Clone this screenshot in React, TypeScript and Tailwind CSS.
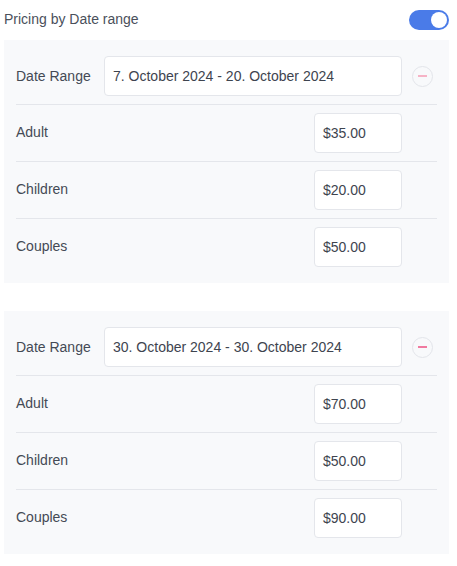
import React from "react";

type Card = { range: string; minus: string; prices: { label: string; value: string }[] };

const cards: Card[] = [
  {
    range: "7. October 2024 - 20. October 2024",
    minus: "bg-[#f6b3c6]",
    prices: [
      { label: "Adult", value: "$35.00" },
      { label: "Children", value: "$20.00" },
      { label: "Couples", value: "$50.00" },
    ],
  },
  {
    range: "30. October 2024 - 30. October 2024",
    minus: "bg-[#f07aa0]",
    prices: [
      { label: "Adult", value: "$70.00" },
      { label: "Children", value: "$50.00" },
      { label: "Couples", value: "$90.00" },
    ],
  },
];

function MinusButton({ color }: { color: string }) {
  return (
    <div className="w-[21px] h-[21px] rounded-full border border-[#e3e5ea] bg-[#f8f9fb] flex items-center justify-center">
      <div className={"w-[9px] h-[1.5px] " + color} />
    </div>
  );
}

function PricingCard({ card }: { card: Card }) {
  return (
    <div className="bg-[#f8f9fb] px-3 py-2">
      <div className="flex items-center py-2 border-b border-[#e4e6eb]">
        <div className="w-[88px] text-[14px] text-[#444a55]">Date Range</div>
        <div className="w-[298px] h-10 bg-white border border-[#e4e6eb] rounded-[4px] flex items-center px-2 text-[14px] text-[#3e444f]">
          {card.range}
        </div>
        <div className="w-[35px] flex items-center pl-[10px]">
          <MinusButton color={card.minus} />
        </div>
      </div>
      {card.prices.map((p, i) => (
        <div
          key={p.label}
          className={
            "flex items-center py-2" +
            (i < card.prices.length - 1 ? " border-b border-[#e4e6eb]" : "")
          }
        >
          <div className="flex-1 pb-[2px] text-[14px] text-[#444a55]">{p.label}</div>
          <div className="w-[88px] h-10 bg-white border border-[#e4e6eb] rounded-[4px] flex items-center px-2 text-[14px] text-[#3e444f]">
            {p.value}
          </div>
          <div className="w-[35px]" />
        </div>
      ))}
    </div>
  );
}

export default function App() {
  return (
    <div
      className="w-[457px] min-h-[566px] bg-white pl-1 pr-2"
      style={{ fontFamily: '"Liberation Sans", Arial, sans-serif' }}
    >
      <div className="h-10 flex items-center justify-between">
        <span className="pb-[2px] text-[14px] text-[#4a505b]">Pricing by Date range</span>
        <div className="w-10 h-5 rounded-full bg-[#4a7be8] flex items-center justify-end pr-[2px]">
          <div className="w-4 h-4 rounded-full bg-white" />
        </div>
      </div>
      <div className="flex flex-col gap-7">
        {cards.map((c, i) => (
          <PricingCard key={i} card={c} />
        ))}
      </div>
    </div>
  );
}
